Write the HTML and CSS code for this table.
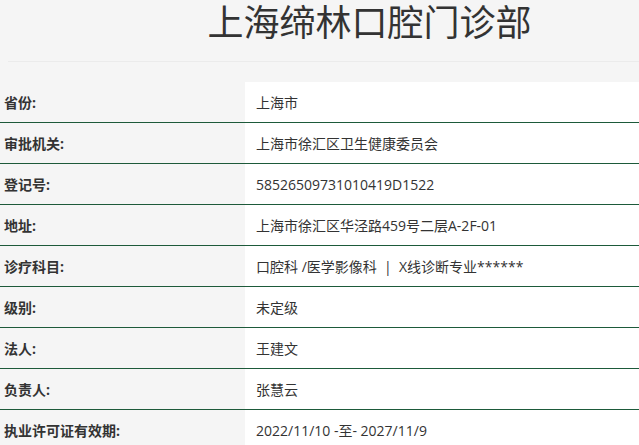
FILE: index.html
```html
<!DOCTYPE html>
<html lang="zh-CN">
<head>
<meta charset="utf-8">
<link rel="stylesheet" href="styles.css">
</head>
<body>
<header class="head">
  <h1 class="title">上海缔林口腔门诊部</h1>
</header>
<div class="rule"></div>
<div class="info">
  <div class="row"><div class="label">省份:</div><div class="value">上海市</div></div>
  <div class="row"><div class="label">审批机关:</div><div class="value">上海市徐汇区卫生健康委员会</div></div>
  <div class="row"><div class="label">登记号:</div><div class="value">58526509731010419D1522</div></div>
  <div class="row"><div class="label">地址:</div><div class="value">上海市徐汇区华泾路459号二层A-2F-01</div></div>
  <div class="row"><div class="label">诊疗科目:</div><div class="value">口腔科 /医学影像科 &nbsp;|&nbsp; X线诊断专业******</div></div>
  <div class="row"><div class="label">级别:</div><div class="value">未定级</div></div>
  <div class="row"><div class="label">法人:</div><div class="value">王建文</div></div>
  <div class="row"><div class="label">负责人:</div><div class="value">张慧云</div></div>
  <div class="row"><div class="label">执业许可证有效期:</div><div class="value">2022/11/10 -至- 2027/11/9</div></div>
</div>
</body>
</html>
```
FILE: styles.css
```css
html, body {
  margin: 0;
  padding: 0;
  background: #f5f5f5;
  color: #333;
  font-family: "Open Sans", "Noto Sans CJK SC", sans-serif;
}
.head {
  height: 61px;
  display: flex;
  justify-content: center;
  padding-left: 100px;
}
.title {
  margin: 0;
  font-size: 36px;
  font-weight: 400;
  line-height: 45px;
  color: #333;
}
.rule {
  margin-left: 8px;
  height: 1px;
  background: #ebebeb;
  margin-bottom: 20px;
}
.info {
  display: flex;
  flex-direction: column;
}
.row {
  display: grid;
  grid-template-columns: 245px 1fr;
  height: 40px;
  border-bottom: 1px solid #1d5a3a;
}
.label {
  display: flex;
  align-items: center;
  padding-left: 4px;
  font-size: 14px;
  font-weight: 700;
  color: #333;
}
.value {
  display: flex;
  align-items: center;
  padding-left: 11px;
  background: #fff;
  font-size: 14px;
  color: #333;
  white-space: pre;
}
```
